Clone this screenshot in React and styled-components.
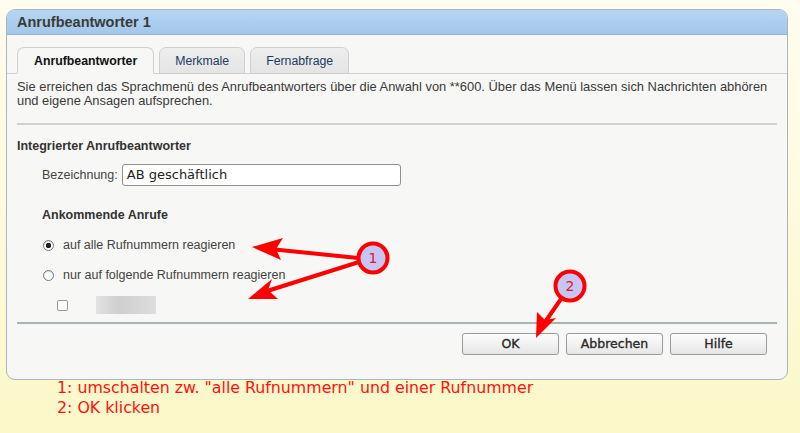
import React from 'react';
import styled, { createGlobalStyle } from 'styled-components';

const GlobalStyle = createGlobalStyle`
  html, body {
    margin: 0;
    padding: 0;
  }
  body {
    background: linear-gradient(#fffdf0, #fcf8c9);
    font-family: "Liberation Sans", Arial, sans-serif;
    min-height: 433px;
  }
`;

export default function App() {
  return (
    <Page>
      <GlobalStyle />
      <Dialog>
        <TitleBar>Anrufbeantworter 1</TitleBar>
        <Tabs>
          <Tab active>Anrufbeantworter</Tab>
          <Tab>Merkmale</Tab>
          <Tab>Fernabfrage</Tab>
        </Tabs>
        <Intro>
          Sie erreichen das Sprachmenü des Anrufbeantworters über die Anwahl von **600. Über das Menü lassen sich Nachrichten abhören
          <br />
          und eigene Ansagen aufsprechen.
        </Intro>
        <Rule />
        <Section>
          <SectionTitle>Integrierter Anrufbeantworter</SectionTitle>
          <FieldRow>
            <Label>Bezeichnung:</Label>
            <TextBox>AB geschäftlich</TextBox>
          </FieldRow>
          <SubTitle>Ankommende Anrufe</SubTitle>
          <Option>
            <Radio checked />
            <OptionLabel>auf alle Rufnummern reagieren</OptionLabel>
          </Option>
          <Option>
            <Radio />
            <OptionLabel>nur auf folgende Rufnummern reagieren</OptionLabel>
          </Option>
          <NumberRow>
            <CheckBox />
            <Blurred />
          </NumberRow>
        </Section>
        <Rule dark />
        <Buttons>
          <Button>OK</Button>
          <Button>Abbrechen</Button>
          <Button>Hilfe</Button>
        </Buttons>
      </Dialog>
      <Notes>
        <div>1: umschalten zw. "alle Rufnummern" und einer Rufnummer</div>
        <div>2: OK klicken</div>
      </Notes>
      <Overlay width="800" height="433" viewBox="0 0 800 433">
        <g stroke="#ff0000" strokeWidth="4" strokeLinecap="round" fill="none">
          <line x1="358" y1="258" x2="270" y2="249" />
          <line x1="359" y1="262" x2="264" y2="292" />
          <line x1="561" y1="299" x2="545" y2="322" />
        </g>
        <g fill="#ff0000">
          <polygon points="252,247 283,238 276,249 281,260" />
          <polygon points="248,299 272,279 268,290 278,299" />
          <polygon points="536,338 537,312 545,320 556,318" />
        </g>
        <Marker cx={373} cy={258} n="1" />
        <Marker cx={570} cy={286} n="2" />
      </Overlay>
    </Page>
  );
}

function Marker({ cx, cy, n }) {
  return (
    <g>
      <circle cx={cx} cy={cy} r="14.5" fill="#c6c6f6" stroke="#ff0000" strokeWidth="4" />
      <text
        x={cx}
        y={cy + 5}
        textAnchor="middle"
        fontFamily="DejaVu Sans, sans-serif"
        fontSize="14"
        fill="#e8141c"
      >
        {n}
      </text>
    </g>
  );
}

const Page = styled.div`
  position: relative;
  width: 800px;
  height: 433px;
  padding: 9px 0 0 6px;
  box-sizing: border-box;
`;

const Dialog = styled.div`
  width: 782px;
  height: 371px;
  box-sizing: border-box;
  border: 1px solid #a9b6bd;
  border-radius: 9px;
  background: #f7f7f5;
  overflow: hidden;
  display: flex;
  flex-direction: column;
`;

const TitleBar = styled.div`
  height: 24px;
  line-height: 24px;
  padding-left: 10px;
  background: linear-gradient(#b6d5f2, #a3c7ea);
  border-bottom: 1px solid #9ab4c8;
  font-size: 14.5px;
  font-weight: bold;
  color: #3a3a3a;
`;

const Tabs = styled.div`
  display: flex;
  gap: 5px;
  margin-top: 12px;
  padding-left: 10px;
  border-bottom: 1px solid #cfcfcf;
`;

const Tab = styled.div`
  height: 25px;
  line-height: 26px;
  padding: ${p => (p.active ? '0 16px' : '0 15px')};
  margin-bottom: -1px;
  border: 1px solid #cfcfcf;
  border-bottom: ${p => (p.active ? '1px solid #f7f7f5' : '1px solid #cfcfcf')};
  border-radius: 7px 7px 0 0;
  background: ${p => (p.active ? '#f7f7f5' : 'linear-gradient(#eeeeee, #e4e4e4)')};
  font-size: 12.3px;
  font-weight: ${p => (p.active ? 'bold' : 'normal')};
  color: ${p => (p.active ? '#111' : '#1d3a63')};
  text-align: center;
`;

const Intro = styled.div`
  margin: 6px 10px 0 10px;
  font-size: 12.9px;
  line-height: 14px;
  color: #3a3a3a;
  white-space: nowrap;
`;

const Rule = styled.div`
  margin: ${p => (p.dark ? '0 10px' : '15px 10px 0 10px')};
  height: 2px;
  background: ${p => (p.dark ? '#a7b5b5' : '#cdd1d1')};
`;

const Section = styled.div`
  padding: 14px 10px 0 10px;
  height: 197px;
  box-sizing: border-box;
`;

const SectionTitle = styled.div`
  font-size: 12.5px;
  font-weight: bold;
  color: #333;
  line-height: 14px;
`;

const FieldRow = styled.div`
  display: flex;
  align-items: center;
  gap: 4px;
  margin-top: 11px;
  padding-left: 25px;
`;

const Label = styled.span`
  font-size: 12.5px;
  color: #444;
`;

const TextBox = styled.div`
  width: 279px;
  height: 22px;
  box-sizing: border-box;
  border: 1px solid #8f8f8f;
  border-radius: 3px;
  background: #fff;
  padding-left: 4px;
  font-family: "DejaVu Sans", sans-serif;
  font-size: 13px;
  line-height: 20px;
  color: #222;
`;

const SubTitle = styled.div`
  margin-top: 22px;
  padding-left: 25px;
  font-size: 12.5px;
  font-weight: bold;
  color: #333;
  line-height: 14px;
`;

const Option = styled.div`
  display: flex;
  align-items: center;
  gap: 9px;
  margin-top: 16px;
  padding-left: 26px;
  height: 14px;
  &:first-of-type {
    margin-top: 13px;
  }
`;

const Radio = styled.span`
  width: 11px;
  height: 11px;
  box-sizing: border-box;
  border: 1px solid #777;
  border-radius: 50%;
  background: radial-gradient(circle, ${p => (p.checked ? '#222 0 2.5px, #fff 3px' : '#fff 0')});
  box-shadow: inset 0 1px 1px rgba(0, 0, 0, 0.15);
`;

const OptionLabel = styled.span`
  font-size: 12.5px;
  color: #444;
`;

const NumberRow = styled.div`
  display: flex;
  align-items: center;
  gap: 28px;
  margin-top: 14px;
  padding-left: 40px;
`;

const CheckBox = styled.span`
  width: 11px;
  height: 11px;
  box-sizing: border-box;
  border: 1px solid #999;
  border-radius: 2px;
  background: #fff;
`;

const Blurred = styled.span`
  width: 60px;
  height: 18px;
  background: linear-gradient(90deg, #e2e2e2 0, #d8d8d8 18%, #cfcfcf 40%, #d6d6d6 70%, #dedede 100%);
`;

const Buttons = styled.div`
  display: flex;
  justify-content: flex-end;
  gap: 7px;
  padding: 9px 20px 0 0;
`;

const Button = styled.div`
  width: 97px;
  height: 22px;
  box-sizing: border-box;
  border: 1px solid #9a9a9a;
  border-radius: 3px;
  background: linear-gradient(#fdfdfd, #e6e6e6);
  font-family: "DejaVu Sans", sans-serif;
  font-size: 12.5px;
  -webkit-text-stroke: 0.35px #2a2a2a;
  color: #2a2a2a;
  text-align: center;
  line-height: 20px;
`;

const Notes = styled.div`
  margin: -2px 0 0 51px;
  font-family: "DejaVu Sans", sans-serif;
  font-size: 15.8px;
  line-height: 20px;
  color: #ff1010;
`;

const Overlay = styled.svg`
  position: absolute;
  left: 0;
  top: 0;
  pointer-events: none;
`;
